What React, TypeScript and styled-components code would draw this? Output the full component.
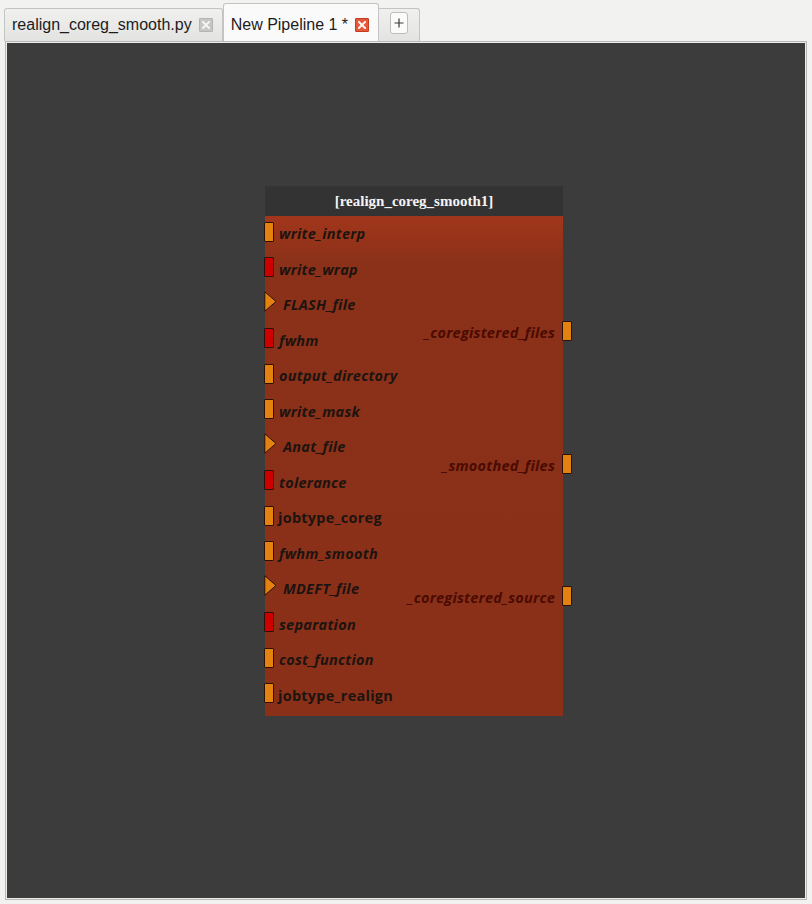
import styled, { createGlobalStyle, css } from "styled-components";

const GlobalStyle = createGlobalStyle`
  html, body {
    margin: 0;
    padding: 0;
    background: #f2f2f1;
  }
  body {
    font-family: "Liberation Sans", Arial, sans-serif;
  }
`;

type PortKind = "opt" | "req" | "file";

interface Input {
  name: string;
  port: PortKind;
  plain?: boolean;
}

const inputs: Input[] = [
  { name: "write_interp", port: "opt" },
  { name: "write_wrap", port: "req" },
  { name: "FLASH_file", port: "file" },
  { name: "fwhm", port: "req" },
  { name: "output_directory", port: "opt" },
  { name: "write_mask", port: "opt" },
  { name: "Anat_file", port: "file" },
  { name: "tolerance", port: "req" },
  { name: "jobtype_coreg", port: "opt", plain: true },
  { name: "fwhm_smooth", port: "opt" },
  { name: "MDEFT_file", port: "file" },
  { name: "separation", port: "req" },
  { name: "cost_function", port: "opt" },
  { name: "jobtype_realign", port: "opt", plain: true },
];

const outputs = ["_coregistered_files", "_smoothed_files", "_coregistered_source"];

const Window = styled.div`
  width: 812px;
  height: 904px;
  display: flex;
  flex-direction: column;
  background: #f2f2f1;
  overflow: hidden;
`;

const TabBar = styled.div`
  height: 41px;
  display: flex;
  align-items: flex-end;
  padding-left: 4px;
  box-sizing: border-box;
`;

const Tab = styled.div<{ $active?: boolean }>`
  display: flex;
  align-items: center;
  gap: 7px;
  box-sizing: border-box;
  border: 1px solid #c4c4c2;
  border-bottom: none;
  border-radius: 3px 3px 0 0;
  font-size: 16px;
  color: #1c1c1c;
  ${(p) =>
    p.$active
      ? css`
          height: 39px;
          padding: 3px 9px 0 7px;
          background: #fafafa;
          margin-bottom: -1px;
        `
      : css`
          height: 33px;
          padding: 0 9px 0 7px;
          background: linear-gradient(#f0f0ef, #e3e3e2);
        `}
`;

const CloseBox = styled.div<{ $red?: boolean }>`
  width: 14px;
  height: 14px;
  box-sizing: border-box;
  display: flex;
  align-items: center;
  justify-content: center;
  border-radius: 1px;
  background: ${(p) => (p.$red ? "#e4573a" : "#c6c6c4")};
  border: 1px solid ${(p) => (p.$red ? "#c43c22" : "#b4b4b2")};
`;

const AddTab = styled.div`
  height: 33px;
  width: 41px;
  box-sizing: border-box;
  border: 1px solid #c4c4c2;
  border-bottom: none;
  border-left: none;
  border-radius: 0 3px 0 0;
  background: linear-gradient(#f0f0ef, #e3e3e2);
  display: flex;
  justify-content: center;
  padding-top: 3px;
`;

const AddButton = styled.div`
  width: 18px;
  height: 22px;
  box-sizing: border-box;
  border: 1px solid #bdbdbb;
  border-radius: 3px;
  background: #fbfbfb;
  display: flex;
  align-items: center;
  justify-content: center;
`;

const Frame = styled.div`
  margin: 0 5px 4px 5px;
  flex: 1;
  border: 1px solid #b8b8b6;
  box-shadow: inset 0 0 0 1px #ececea;
  padding: 1px;
  display: flex;
`;

const Canvas = styled.div`
  position: relative;
  flex: 1;
  background: #3c3c3c;
`;

const Node = styled.div`
  position: absolute;
  left: 258px;
  top: 143px;
  width: 298px;
  display: flex;
  flex-direction: column;
`;

const NodeTitle = styled.div`
  height: 30px;
  background: #333333;
  color: #f4f4f4;
  font-family: "Liberation Serif", "Times New Roman", serif;
  font-weight: bold;
  font-size: 15px;
  display: flex;
  align-items: center;
  justify-content: center;
`;

const NodeBody = styled.div`
  height: 500px;
  background: linear-gradient(#a2361b 0px, #8b3119 45px, #8a3019 100%);
  display: flex;
  justify-content: space-between;
`;

const InputColumn = styled.div`
  display: flex;
  flex-direction: column;
`;

const InputRow = styled.div`
  height: 35.5px;
  display: flex;
  align-items: center;
  margin-left: -1px;
`;

const PortBox = styled.div<{ $kind: PortKind }>`
  width: 10px;
  height: 20px;
  box-sizing: border-box;
  border: 1px solid #2b1208;
  border-radius: 1px;
  background: ${(p) => (p.$kind === "req" ? "#cc0000" : "#e3820f")};
  flex-shrink: 0;
  margin-top: -4px;
`;

const FileArrow = styled.svg`
  width: 13px;
  height: 21px;
  flex-shrink: 0;
  margin-top: -6px;
`;

const PortLabel = styled.span<{ $plain?: boolean; $file?: boolean }>`
  font-family: "Open Sans", "DejaVu Sans", sans-serif;
  font-weight: 700;
  font-size: 14.5px;
  font-style: ${(p) => (p.$plain ? "normal" : "italic")};
  color: #1d1410;
  margin-left: ${(p) => (p.$file ? "6px" : p.$plain ? "4px" : "5px")};
  letter-spacing: 0.25px;
`;

const OutputColumn = styled.div`
  display: flex;
  flex-direction: column;
  align-items: flex-end;
  padding-top: 105px;
  gap: 112.5px;
  margin-right: -9px;
`;

const OutputRow = styled.div`
  height: 20px;
  display: flex;
  align-items: center;
`;

const OutputLabel = styled.span`
  font-family: "Open Sans", "DejaVu Sans", sans-serif;
  font-weight: 700;
  font-style: italic;
  font-size: 14.5px;
  letter-spacing: 0.25px;
  color: #4a0b02;
  margin-right: 7px;
  margin-top: 3px;
`;

const OutPort = styled.div`
  width: 10px;
  height: 20px;
  box-sizing: border-box;
  border: 1px solid #2b1208;
  border-radius: 1px;
  background: #e3820f;
`;

const Cross = ({ color }: { color: string }) => (
  <svg width="8" height="8" viewBox="0 0 8 8">
    <path d="M1 1 L7 7 M7 1 L1 7" stroke={color} strokeWidth="2" strokeLinecap="square" />
  </svg>
);

const Port = ({ kind }: { kind: PortKind }) =>
  kind === "file" ? (
    <FileArrow viewBox="0 0 13 21">
      <path d="M0.8 0.8 L12 10.5 L0.8 20.2 Z" fill="#e3820f" stroke="#2b1208" strokeWidth="1" />
    </FileArrow>
  ) : (
    <PortBox $kind={kind} />
  );

export default function App() {
  return (
    <>
      <GlobalStyle />
      <Window>
        <TabBar>
          <Tab>
            realign_coreg_smooth.py
            <CloseBox>
              <Cross color="#f4f4f4" />
            </CloseBox>
          </Tab>
          <Tab $active>
            New Pipeline 1 *
            <CloseBox $red>
              <Cross color="#fff4f0" />
            </CloseBox>
          </Tab>
          <AddTab>
            <AddButton>
              <svg width="10" height="10" viewBox="0 0 10 10">
                <path d="M5 0.5 V9.5 M0.5 5 H9.5" stroke="#3a3a3a" strokeWidth="1.2" />
              </svg>
            </AddButton>
          </AddTab>
        </TabBar>
        <Frame>
          <Canvas>
            <Node>
              <NodeTitle>[realign_coreg_smooth1]</NodeTitle>
              <NodeBody>
                <InputColumn>
                  {inputs.map((inp) => (
                    <InputRow key={inp.name}>
                      <Port kind={inp.port} />
                      <PortLabel $plain={inp.plain} $file={inp.port === "file"}>
                        {inp.name}
                      </PortLabel>
                    </InputRow>
                  ))}
                </InputColumn>
                <OutputColumn>
                  {outputs.map((o) => (
                    <OutputRow key={o}>
                      <OutputLabel>{o}</OutputLabel>
                      <OutPort />
                    </OutputRow>
                  ))}
                </OutputColumn>
              </NodeBody>
            </Node>
          </Canvas>
        </Frame>
      </Window>
    </>
  );
}
